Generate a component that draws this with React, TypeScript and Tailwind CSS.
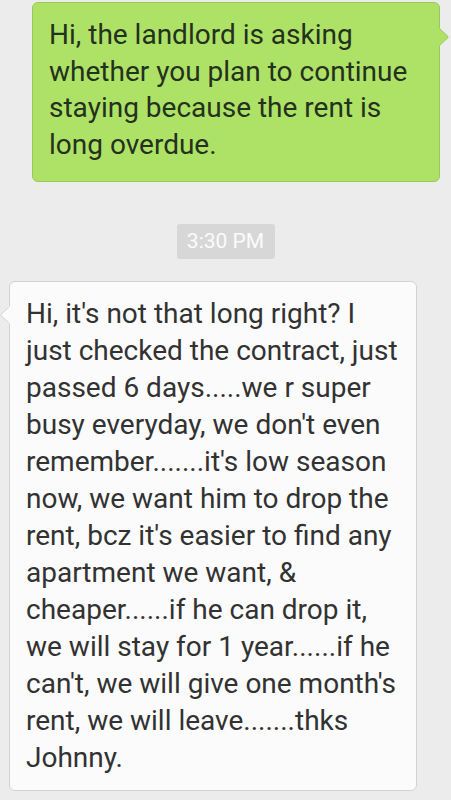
import React from 'react';

const sentLines = [
    'Hi, the landlord is asking',
    'whether you plan to continue',
    'staying because the rent is',
    'long overdue.',
];

const replyLines = [
    "Hi, it's not that long right? I",
    'just checked the contract, just',
    'passed 6 days.....we r super',
    "busy everyday, we don't even",
    "remember.......it's low season",
    'now, we want him to drop the',
    "rent, bcz it's easier to find any",
    'apartment we want, &',
    'cheaper......if he can drop it,',
    'we will stay for 1 year......if he',
    "can't, we will give one month's",
    'rent, we will leave.......thks',
    'Johnny.',
];

const BubbleText: React.FC<{ lines: string[] }> = ({ lines }) => (
    <>
        {lines.map((line, i) => (
            <div key={i} className="whitespace-pre">{line}</div>
        ))}
    </>
);

export default function App() {
    return (
        <div className="min-h-[800px] bg-[#ececec] pt-[2px] font-['Roboto','Liberation_Sans',sans-serif]">
            {/* outgoing message */}
            <div className="relative ml-[32px] w-[408px] rounded-[6px] border border-[#97c957] bg-[#aee266] pl-[16px] pt-[14px] pb-[17px] text-[28px] leading-[36.7px] text-[#24311d]">
                <BubbleText lines={sentLines} />
                <svg className="absolute right-[-10px] top-[25px]" width="10" height="18" viewBox="0 0 10 18">
                    <path d="M0 0 L9 8.5 Q9.6 9 9 9.5 L0 18 Z" fill="#aee266" stroke="#97c957" strokeWidth="1" />
                    <rect x="0" y="0.5" width="1.2" height="17" fill="#aee266" />
                </svg>
            </div>

            {/* time stamp */}
            <div className="mt-[42px] flex justify-center">
                <div className="flex h-[35px] w-[98px] items-center justify-center rounded-[3px] bg-[#d7d7d7] pt-[1px] text-[21px] text-[#fbfbfb]">
                    3:30 PM
                </div>
            </div>

            {/* incoming message */}
            <div className="relative ml-[9px] mt-[22px] w-[408px] rounded-[6px] border border-[#d2d2d2] bg-[#fbfbfb] pl-[16px] pt-[13px] pb-[14px] text-[28px] leading-[37px] text-[#323232]">
                <BubbleText lines={replyLines} />
                <svg className="absolute left-[-10px] top-[24px]" width="10" height="18" viewBox="0 0 10 18">
                    <path d="M10 0 L1 8.5 Q0.4 9 1 9.5 L10 18 Z" fill="#fbfbfb" stroke="#d2d2d2" strokeWidth="1" />
                    <rect x="8.8" y="0.5" width="1.2" height="17" fill="#fbfbfb" />
                </svg>
            </div>
        </div>
    );
}
